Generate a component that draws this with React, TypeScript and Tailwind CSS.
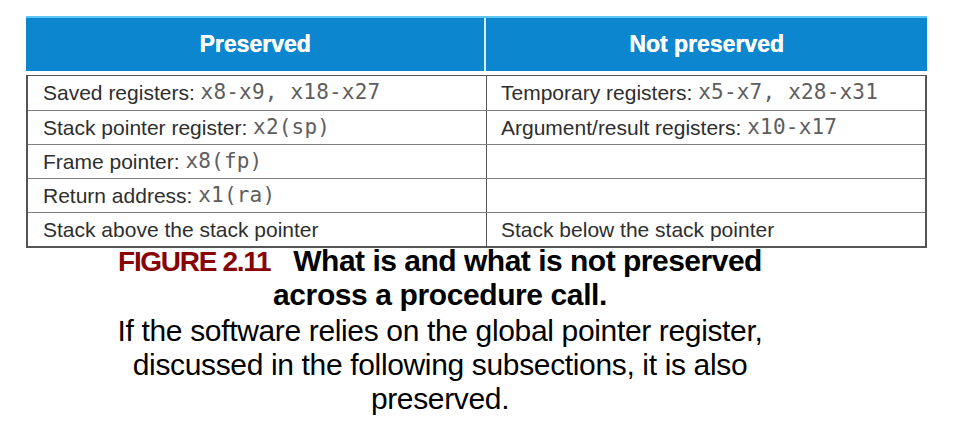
const rows: [React.ReactNode, React.ReactNode][] = [
  [
    <>Saved registers: <Code>x8-x9, x18-x27</Code></>,
    <>Temporary registers: <Code>x5-x7, x28-x31</Code></>,
  ],
  [
    <>Stack pointer register: <Code>x2(sp)</Code></>,
    <>Argument/result registers: <Code>x10-x17</Code></>,
  ],
  [<>Frame pointer: <Code>x8(fp)</Code></>, null],
  [<>Return address: <Code>x1(ra)</Code></>, null],
  [<>Stack above the stack pointer</>, <>Stack below the stack pointer</>],
]

function Code({ children }: { children: React.ReactNode }) {
  return (
    <span className="font-['DejaVu_Sans_Mono',monospace] text-[21px] text-[#5e5e5e] tracking-[0.2px]">
      {children}
    </span>
  )
}

export default function App() {
  return (
    <div className="w-[967px] h-[435px] bg-white overflow-hidden font-['Liberation_Sans',Arial,sans-serif]">
      <div className="ml-[26px] pt-[16px] w-[901px]">
        {/* header */}
        <div className="flex h-[55px] bg-[#0b86cf] border-t-2 border-[#5cc4f2] text-white font-bold text-[23px] [text-shadow:0.4px_0_0_#fff]">
          <div className="w-[458px] flex items-center justify-center">Preserved</div>
          <div className="w-[2px] bg-[#d8eefa]" />
          <div className="flex-1 flex items-center justify-center">Not preserved</div>
        </div>

        {/* body */}
        <div className="mt-[4px] border-x-2 border-b-2 border-t border-[#555] text-[21px] text-[#2e2e2e]">
          {rows.map(([a, b], i) => (
            <div key={i} className={`flex h-[34px] ${i > 0 ? 'border-t border-[#808080]' : ''}`}>
              <div className="w-[458px] pl-[15px] flex items-center whitespace-pre">{a}</div>
              <div className="w-px bg-[#555]" />
              <div className="flex-1 pl-[14px] flex items-center whitespace-pre">{b}</div>
            </div>
          ))}
        </div>
      </div>

      {/* caption */}
      <div className="w-[880px] text-center text-black">
        <div className="font-bold text-[30px] leading-[33px] mt-[-4px] tracking-[-0.5px]">
          <span className="text-[#870303] text-[28px] tracking-[-1.3px] mr-[23px]">FIGURE 2.11</span>
          What is and what is not preserved
        </div>
        <div className="font-bold text-[30px] leading-[33px] tracking-[-0.4px]">across a procedure call.</div>
        <div className="text-[30px] leading-[34px] mt-[3px] tracking-[-0.35px]">
          If the software relies on the global pointer register,
          <br />
          discussed in the following subsections, it is also
          <br />
          preserved.
        </div>
      </div>
    </div>
  )
}
